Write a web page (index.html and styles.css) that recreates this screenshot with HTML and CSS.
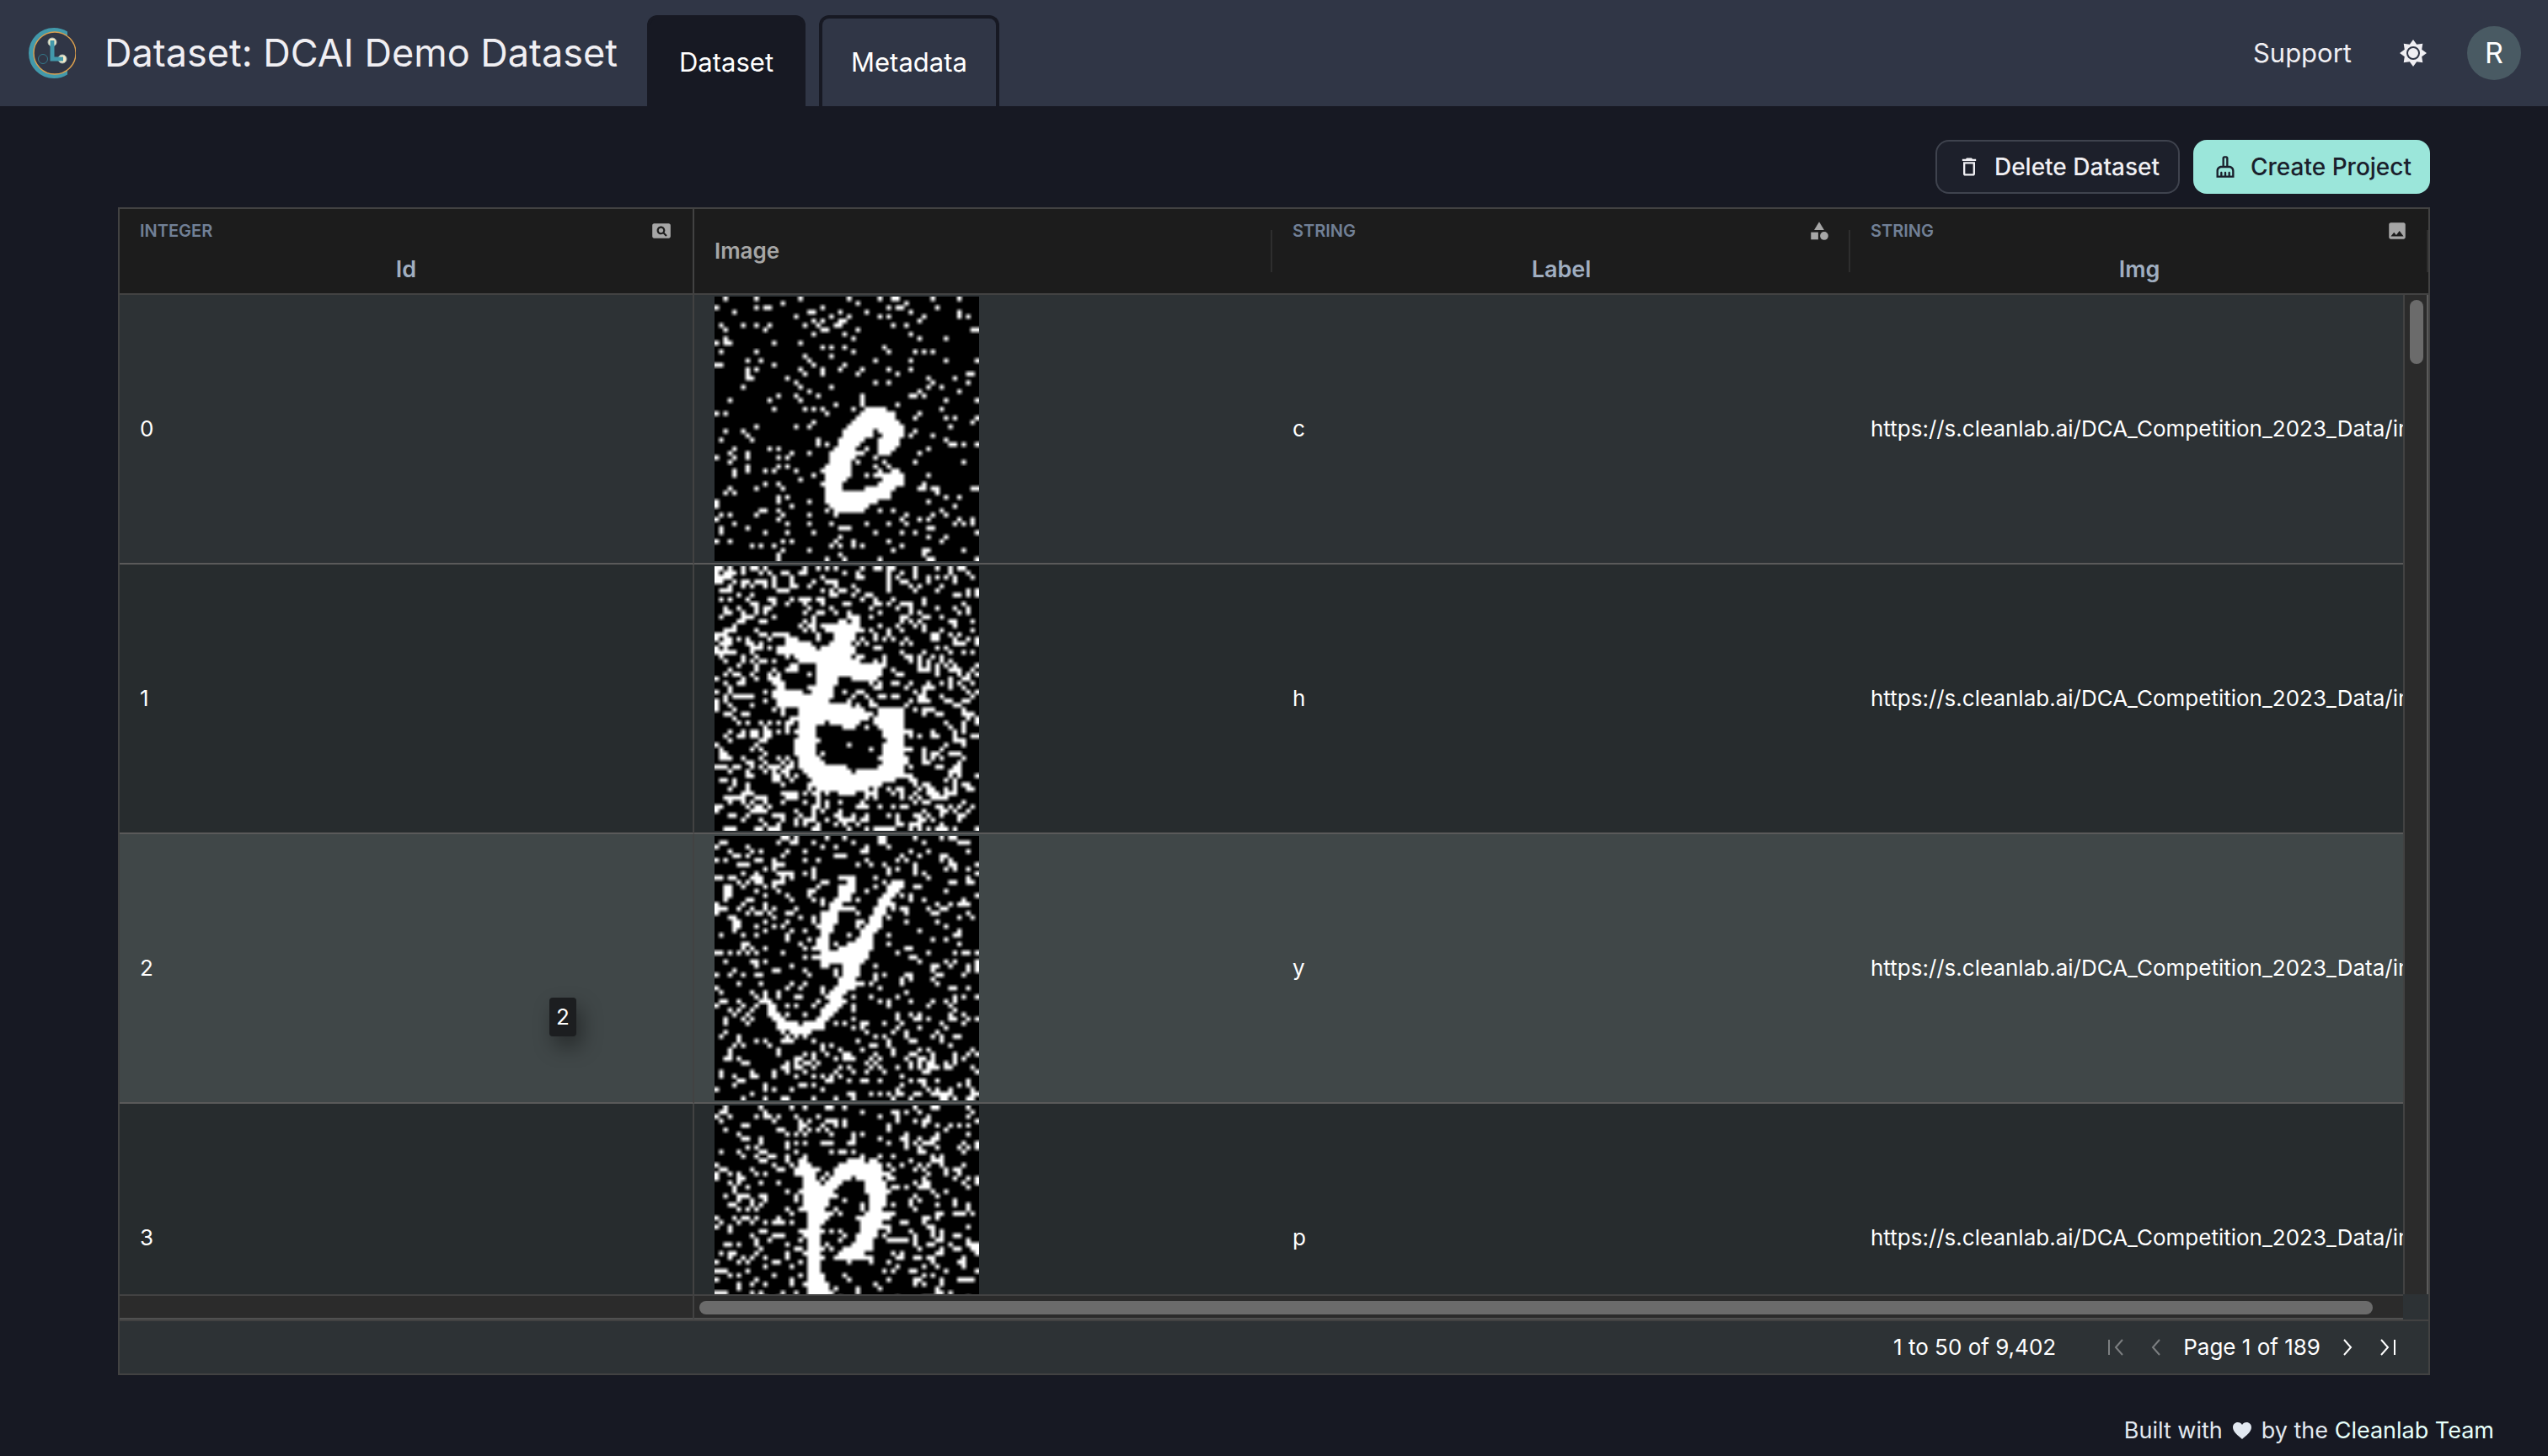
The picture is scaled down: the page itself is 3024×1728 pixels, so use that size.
FILE: index.html
```
<!DOCTYPE html>
<html lang="en">
<head>
<meta charset="utf-8">
<title>Dataset: DCAI Demo Dataset</title>
<link rel="stylesheet" href="styles.css">
</head>
<body>
<header class="topbar">
  <a class="logo" href="#" aria-label="Home">
    <svg width="56" height="60" viewBox="0 0 56 60">
      <defs><clipPath id="cut"><rect width="46" height="60"/></clipPath></defs>
      <circle cx="30" cy="30" r="27" fill="none" stroke="#4299ab" stroke-width="6" clip-path="url(#cut)"/>
      <circle cx="31" cy="30" r="25" fill="#303646" stroke="#dca04e" stroke-width="1.4"/>
      <circle cx="17" cy="37" r="5.5" fill="none" stroke="#34788a" stroke-width="1"/>
      <circle cx="28" cy="17" r="5" fill="#f7ecc9" stroke="#a5b6b4" stroke-width="1"/>
      <circle cx="40" cy="37" r="5" fill="#f7ecc9" stroke="#a5b6b4" stroke-width="1"/>
      <path d="M28 15V37H41" fill="none" stroke="#4299ab" stroke-width="5"/>
    </svg>
  </a>
  <h1 class="title">Dataset: DCAI Demo Dataset</h1>
  <nav class="tabs">
    <a class="tab tab-active" href="#" aria-current="page">Dataset</a>
    <a class="tab" href="#">Metadata</a>
  </nav>
  <div class="account">
    <a class="support" href="#">Support</a>
    <button class="theme" type="button" aria-label="Toggle theme">
      <svg width="32" height="32" viewBox="0 0 32 32">
        <polygon points="16,0 20.2,5.8 27.3,4.7 26.2,11.8 32,16 26.2,20.2 27.3,27.3 20.2,26.2 16,32 11.8,26.2 4.7,27.3 5.8,20.2 0,16 5.8,11.8 4.7,4.7 11.8,5.8" fill="#f0eff3"/>
        <circle cx="16" cy="16" r="7" fill="#f0eff3" stroke="#303646" stroke-width="2"/>
      </svg>
    </button>
    <button class="avatar" type="button">R</button>
  </div>
</header>

<main class="content">
  <div class="actions">
    <button class="btn btn-outline" type="button">
      <svg width="28" height="28" viewBox="0 0 24 24" fill="currentColor"><path d="M6 19c0 1.1.9 2 2 2h8c1.1 0 2-.9 2-2V7H6v12zM8 9h8v10H8V9zm7.500-5l-1-1h-5l-1 1H5v2h14V4z"/></svg>
      Delete Dataset
    </button>
    <button class="btn btn-primary" type="button">
      <svg width="28" height="28" viewBox="0 0 24 24" fill="currentColor"><path d="M16 11h-1V3c0-1.100-.9-2-2-2h-2C9.900 1 9 1.900 9 3v8H8c-2.760 0-5 2.240-5 5v7h18v-7c0-2.760-2.240-5-5-5zM11 3h2v8h-2V3zm8 18h-2v-3c0-.55-.45-1-1-1s-1 .45-1 1v3h-2v-3c0-.55-.45-1-1-1s-1 .45-1 1v3H9v-3c0-.55-.45-1-1-1s-1 .45-1 1v3H5v-5c0-1.650 1.350-3 3-3h8c1.650 0 3 1.350 3 3v5z"/></svg>
      Create Project
    </button>
  </div>

  <section class="grid">
    <div class="viewport">
      <table class="table">
        <thead>
          <tr>
            <th class="pinned" scope="col">
              <div class="head-type">INTEGER
                <svg width="26" height="26" viewBox="0 0 24 24" fill="#a6a6a6"><path d="M11.500 9C10.120 9 9 10.120 9 11.500s1.120 2.500 2.500 2.500 2.500-1.120 2.500-2.500S12.880 9 11.500 9zM20 4H4c-1.100 0-2 .9-2 2v12c0 1.100.9 2 2 2h16c1.100 0 2-.9 2-2V6c0-1.100-.9-2-2-2zm-3.210 14.210l-2.910-2.910c-.69.44-1.510.7-2.390.7C9.010 16 7 13.990 7 11.500S9.010 7 11.500 7 16 9.010 16 11.500c0 .88-.26 1.690-.7 2.390l2.910 2.900-1.420 1.420z"/></svg>
              </div>
              <div class="head-name">Id</div>
            </th>
            <th class="divided plain" scope="col">Image</th>
            <th class="divided" scope="col">
              <div class="head-type">STRING
                <svg width="26" height="26" viewBox="0 0 24 24" fill="#a6a6a6"><path d="M12 2l-5.500 9h11z"/><circle cx="17.500" cy="17.500" r="4.500"/><path d="M3 13.500h8v8H3z"/></svg>
              </div>
              <div class="head-name">Label</div>
            </th>
            <th class="divided" scope="col">
              <div class="head-type">STRING
                <svg width="26" height="26" viewBox="0 0 24 24" fill="#a6a6a6"><path d="M21 19V5c0-1.100-.9-2-2-2H5c-1.100 0-2 .9-2 2v14c0 1.100.9 2 2 2h14c1.100 0 2-.9 2-2zM8.500 13.500l2.500 3.010L14.500 12l4.500 6H5l3.500-4.500z"/></svg>
              </div>
              <div class="head-name">Img</div>
            </th>
          </tr>
        </thead>
        <tbody>
          <tr>
            <td class="pinned">0</td>
            <td><canvas class="sample" data-sample="c" width="60" height="60"></canvas></td>
            <td>c</td>
            <td>https://s.cleanlab.ai/DCA_Competition_2023_Data/images</td>
          </tr>
          <tr>
            <td class="pinned">1</td>
            <td><canvas class="sample" data-sample="h" width="60" height="60"></canvas></td>
            <td>h</td>
            <td>https://s.cleanlab.ai/DCA_Competition_2023_Data/images</td>
          </tr>
          <tr class="hovered">
            <td class="pinned">2<div class="tooltip" role="tooltip">2</div></td>
            <td><canvas class="sample" data-sample="y" width="60" height="60"></canvas></td>
            <td>y</td>
            <td>https://s.cleanlab.ai/DCA_Competition_2023_Data/images</td>
          </tr>
          <tr>
            <td class="pinned">3</td>
            <td><canvas class="sample" data-sample="p" width="60" height="60"></canvas></td>
            <td>p</td>
            <td>https://s.cleanlab.ai/DCA_Competition_2023_Data/images</td>
          </tr>
        </tbody>
      </table>
      <div class="vscroll"><div class="vthumb"></div></div>
    </div>
    <div class="hscroll">
      <div class="hscroll-pinned"></div>
      <div class="htrack"><div class="hthumb"></div></div>
      <div class="hcorner"></div>
    </div>
    <div class="paging">
      <span class="summary">1 to 50 of 9,402</span>
      <button class="page-btn" type="button" disabled aria-label="First page"><svg width="32" height="32" viewBox="0 0 32 32"><path d="M8 7V25M24 7L16 16L24 25"/></svg></button>
      <button class="page-btn" type="button" disabled aria-label="Previous page"><svg width="32" height="32" viewBox="0 0 32 32"><path d="M20 7L12 16L20 25"/></svg></button>
      <span>Page 1 of 189</span>
      <button class="page-btn" type="button" aria-label="Next page"><svg width="32" height="32" viewBox="0 0 32 32"><path d="M12 7L20 16L12 25"/></svg></button>
      <button class="page-btn" type="button" aria-label="Last page"><svg width="32" height="32" viewBox="0 0 32 32"><path d="M8 7L16 16L8 25M24 7V25"/></svg></button>
    </div>
  </section>
</main>

<footer class="credits">
  <span>Built with</span>
  <svg width="24" height="24" viewBox="0 0 24 24" fill="#e2e8f0"><path d="M12 22C8 18.500 1 13.500 1 8C1 4.500 3.600 2 6.800 2C9 2 11 3.200 12 5C13 3.200 15 2 17.200 2C20.400 2 23 4.500 23 8C23 13.500 16 18.500 12 22Z"/></svg>
  <span>by the <a href="#">Cleanlab Team</a></span>
</footer>
<script src="app.js"></script>
</body>
</html>
```
FILE: styles.css
```
* { box-sizing: border-box; }

body {
  margin: 0;
  height: 100vh;
  display: flex;
  flex-direction: column;
  background: #171923;
  color: #fff;
  font-family: Inter, "Liberation Sans", sans-serif;
  font-size: 26px;
  line-height: 32px;
}

a { color: inherit; text-decoration: none; }
button { font: inherit; color: inherit; border: 0; padding: 0; background: none; }
svg { display: block; flex: none; }

/* Top bar */
.topbar {
  flex: none;
  height: 126px;
  display: flex;
  align-items: center;
  padding: 0 32px 0 34px;
  background: #303646;
}
.logo { margin-right: 34px; }
.title {
  margin: 0 35px 0 0;
  font-size: 45px;
  font-weight: 400;
  line-height: 56px;
  color: #f0eff3;
  white-space: nowrap;
}
.tabs { display: flex; align-self: flex-end; gap: 16px; }
.tab {
  display: flex;
  align-items: center;
  height: 108px;
  padding: 0 34px;
  border: 4px solid #171923;
  border-bottom: 0;
  border-radius: 12px 12px 0 0;
  font-size: 31px;
}
.tab-active { background: #171923; }
.account { display: flex; align-items: center; margin-left: auto; }
.support { margin-right: 57px; font-size: 31px; color: #f0eff3; }
.theme { margin-right: 48px; }
.avatar {
  width: 64px;
  height: 64px;
  border-radius: 50%;
  background: #495a63;
  font-size: 34px;
}

/* Page body */
.content {
  flex: 1;
  min-height: 0;
  display: flex;
  flex-direction: column;
  gap: 16px;
  padding: 40px 140px 0;
}
.actions { flex: none; display: flex; justify-content: flex-end; gap: 16px; }
.btn {
  display: flex;
  align-items: center;
  gap: 16px;
  height: 64px;
  padding: 0 22px 0 24px;
  border-radius: 16px;
  font-size: 28px;
  font-weight: 500;
}
.btn-outline { border: 2px solid #3f434e; background: #1d202b; color: #f0eff3; }
.btn-primary { background: #9be6da; color: #1a202c; }

/* Data grid */
.grid {
  flex: 1;
  min-height: 0;
  display: flex;
  flex-direction: column;
  border: 2px solid #424242;
  background: #2d3235;
}
.viewport { position: relative; flex: 1; min-height: 0; overflow: hidden; }
.table {
  width: 100%;
  table-layout: fixed;
  border-collapse: separate;
  border-spacing: 0;
}
th {
  position: relative;
  height: 102px;
  padding: 12px 24px;
  border-bottom: 2px solid #424242;
  background: #1c1c1c;
  text-align: left;
  vertical-align: top;
  font-weight: 600;
}
th.pinned { width: 682px; }
th.plain { vertical-align: middle; color: #a6a6a6; }
.divided::after {
  content: "";
  position: absolute;
  top: 25px;
  right: 0;
  width: 2px;
  height: 50px;
  background: #2e2e2e;
}
.pinned { border-right: 2px solid #424242; }
.head-type {
  display: flex;
  justify-content: space-between;
  align-items: center;
  height: 28px;
  margin-bottom: 16px;
  font-size: 20px;
  color: #718096;
}
.head-name { font-size: 27px; text-align: center; color: #a0aec0; }

td {
  position: relative;
  height: 320px;
  padding: 0 24px;
  border-bottom: 2px solid #5a5a5a;
  overflow: hidden;
  white-space: nowrap;
  vertical-align: middle;
}
tbody tr:nth-child(odd) { background: #2d3235; }
tbody tr:nth-child(even) { background: #272c2e; }
tbody tr.hovered { background: #404748; }
.sample { display: block; width: 314px; height: 314px; }
.tooltip {
  position: absolute;
  left: 510px;
  top: 194px;
  padding: 7px 8px;
  border-radius: 4px;
  background: #1c1e20;
  box-shadow: 6px 12px 24px rgba(0, 0, 0, 0.4);
}

.vscroll {
  position: absolute;
  top: 102px;
  right: 0;
  bottom: 0;
  width: 30px;
  padding: 6px 4px 0 6px;
  border-left: 2px solid #424242;
  border-right: 2px solid #5a5a5a;
  background: #2b2b2b;
}
.vthumb { height: 76px; border-radius: 8px; background: #6b6b6b; }
.hscroll { flex: none; display: flex; height: 30px; }
.hscroll-pinned, .htrack {
  border-top: 2px solid #424242;
  border-bottom: 2px solid #505050;
  background: #2b2b2b;
}
.hscroll-pinned { width: 682px; border-right: 2px solid #424242; }
.htrack { flex: 1; padding: 6px 36px 0 6px; }
.hthumb { height: 16px; border-radius: 8px; background: #6b6b6b; }
.hcorner { width: 30px; }
.paging {
  flex: none;
  display: flex;
  align-items: center;
  justify-content: flex-end;
  gap: 16px;
  height: 64px;
  padding: 0 32px;
  border-top: 2px solid #424242;
}
.summary { margin-right: 39px; }
.page-btn svg { fill: none; stroke: #fff; stroke-width: 2; }
.page-btn:disabled svg { stroke: #7c7f81; }

/* Footer */
.credits {
  flex: none;
  display: flex;
  justify-content: flex-end;
  gap: 11px;
  height: 96px;
  padding: 50px 64px 0;
  font-size: 27px;
  color: #e2e8f0;
}
.credits svg { margin-top: 4px; }
.credits a { color: #e6fffa; }
```
FILE: app.js
```
// Thumbnails are 60 x 60 bitmaps. Each stroke row is "row:from-to,from-to";
// speckles are either listed per row or scattered at a given density.
const samples = {
  c: {
    strokes: '25:34-38 26:33-40 27:32-40 28:31-41 29:30-42 30:29-35,37-42 31:29-35,38-42 32:28-33,37-41 33:28-32,37-41 34:27-31,37-40 35:26-31,37-39 36:26-31 37:26-30 38:25-30 39:24-30,40-41 40:25-30,37-42 41:25-29,38-42 42:24-28,37-42 43:25-28,34-40 44:25-39 45:25-39 46:25-36 47:26-34 48:27-33',
    specks: [
      [2,9,19,30,37,40,41,49,55],[15,32,43],[0,9,11,12,24,39,41,42,50],[4,21,22,28,34,44,55],[18,26,30,37,39,47,55,57],
      [22,24,28,29,46],[1,6,9,12,20,23,27,28,40,43],[2,11,24,25,32,58,59],[22,29,44],[2,31,46,52],
      [0,2,3,13,19],[24,26,29,38],[1,9,31,39,45,47,49],[20,26],[7,10,21,36,44,52,59],
      [0,1,13,22,29],[7,9,19,24,28,33,39,44],[7,20,24,32,41,57,58],[7,8,16,48,54],[18,36,39,49,57],
      [6,19,26,48,51],[21,46,55],[14,18,23,33,44,45,47],[3,12,19,33,52,59],[27,33,41],
      [13,20,22,24,31,51],[0,2,25,46],[45,52,54,59],[22,58],[9,18,21,53],
      [2,6,45],[7,44,49],[1,8,23,52],[23,25,53,54,56,59],[4,12,14,34,48],
      [3,7,17,21,32,33,46],[0,4,7,14,16,36],[3,32,38,45,56],[7,14,16,36,39],[4,7,11,13,18,37],
      [4,22,34,36,48],[19],[11,14,47],[3,9,15,46,47,49,50,58,59],[2,4,50],
      [14,16,52,55],[0,14,21,48],[0,17,54],[10,11,14,25,37,40,51],[1,3,9,15,21,27,43,49,52],
      [0,14,42,46,48,55,58],[4,16,21,26,34,39,43,54,56,58],[1,7,28,29,30,48,49],[1,11,16,22,36,42,45,59],[28,48,52],
      [0,3,15,17,27,31,39,51],[8,10,13,26,28,31,33,42],[15,21,40,47,48,56],[14,28,47],[14,25,29,37,48,49,59]
    ]
  },
  h: {
    density: 0.29, seed: 11,
    strokes: '11:31-32 12:31-32 13:28-32 14:27-32 15:16-16,27-31 16:16-18,27-30 17:16-20,26-30 18:16-22,26-30 19:16-30 20:18-29 21:19-31 22:17-18,23-38 23:16-18,23-36 24:14-14,23-36 25:13-14,23-27,31-36 26:13-15,23-27 27:14-15,22-26 28:13-19,22-25 29:13-25 30:14-25 31:15-30 32:19-33,37-41 33:19-33,37-41 34:19-33,38-42 35:19-23,26-32,36-42 36:19-22,29-31,38-42 37:19-22,38-42 38:19-22,39-42 39:18-22,39-42 40:18-22,38-42 41:18-22,38-42 42:18-22,38-42 43:19-23,38-42 44:19-24,38-42 45:19-29,37-42 46:20-30,33-42 47:22-41 48:22-40 49:23-37 50:24-34',
    quiet: '12:33-38 20:10-15 21:20-22 22:19-22 23:20-22 24:16-17,20-22 25:16-17,20-22 26:16-22,28-33 27:16-19,28-33 36:24-28 37:24-37 38:24-37 39:24-37 40:23-36 41:23-36 42:25-37 43:26-36 44:29-36 45:32-36 38:14-18 39:14-17 40:12-17 41:12-17 42:12-17'
  },
  y: {
    density: 0.18, seed: 29,
    strokes: '9:30-31 10:30-31,40-42 11:29-31,39-42 12:28-30,39-41 13:28-30,38-40 14:27-29,37-39 15:26-28,37-39 16:26-28,36-38 17:25-27,36-38 18:24-27,35-37 19:24-27,35-37 20:24-26,34-36 21:24-26,33-36 22:24-25,33-35 23:24-25,33-35 24:23-25,30-34 25:23-25,28-34 26:24-33 27:23-34 28:24-33 29:24-24,29-32 30:29-32 31:29-32 32:28-31 33:28-33 34:28-31 35:11-11,26-29 36:11-11,26-28 37:11-12,26-28 38:12-13,25-28 39:12-13,24-27 40:12-14,24-26 41:13-15,23-25 42:14-18,20-24 43:14-23 44:17-21'
  },
  p: {
    density: 0.18, seed: 47,
    strokes: '11:20-20 12:19-20,30-33 13:19-21,28-37 14:19-22,27-37 15:18-22,27-38 16:20-22,26-29,33-37 17:20-23,25-28,34-38 18:20-27,34-37 19:19-26,34-37 20:20-26,35-38 21:20-25,35-38 22:20-25,35-38 23:19-24,35-37 24:21-24,34-39 25:21-25,32-39 26:21-24,33-37 27:21-23,33-39 28:19-23,33-36 29:20-23,32-36 30:21-23,32-35 31:21-23,31-35 32:21-24,30-35 33:20-23,28-33 34:21-24,27-35 35:21-23,30-30 36:21-23 37:21-23 38:21-23 39:21-24 40:20-25 41:21-25 42:21-25 43:21-25 44:21-25 45:21-25 46:21-25',
    quiet: '9:19-26 10:20-27 11:21-36 12:21-26 17:29-33 18:28-33 19:29-33 20:29-33 21:27-33 22:28-34 25:27-30 26:26-32 27:25-31'
  }
};

function spans(text, visit) {
  if (!text) return;
  for (const item of text.split(' ')) {
    const [row, ranges] = item.split(':');
    for (const range of ranges.split(',')) {
      const [from, to] = range.split('-').map(Number);
      for (let x = from; x <= to; x++) visit(x, Number(row));
    }
  }
}

function drawSample(canvas) {
  const sample = samples[canvas.dataset.sample];
  const size = 60;
  const cells = new Uint8Array(size * size);
  if (sample.specks) {
    sample.specks.forEach((columns, y) => columns.forEach((x) => { cells[y * size + x] = 1; }));
  } else {
    let state = sample.seed;
    for (let i = 0; i < cells.length; i++) {
      state = (Math.imul(state, 1664525) + 1013904223) >>> 0;
      cells[i] = state / 4294967296 < sample.density ? 1 : 0;
    }
  }
  spans(sample.quiet, (x, y) => { if ((x * x + y * 5) % 11) cells[y * size + x] = 0; });
  spans(sample.strokes, (x, y) => { cells[y * size + x] = 1; });

  const context = canvas.getContext('2d');
  const image = context.createImageData(size, size);
  cells.forEach((on, i) => image.data.set(on ? [255, 255, 255, 255] : [0, 0, 0, 255], i * 4));
  context.putImageData(image, 0, 0);
}

document.querySelectorAll('.sample').forEach(drawSample);
```
